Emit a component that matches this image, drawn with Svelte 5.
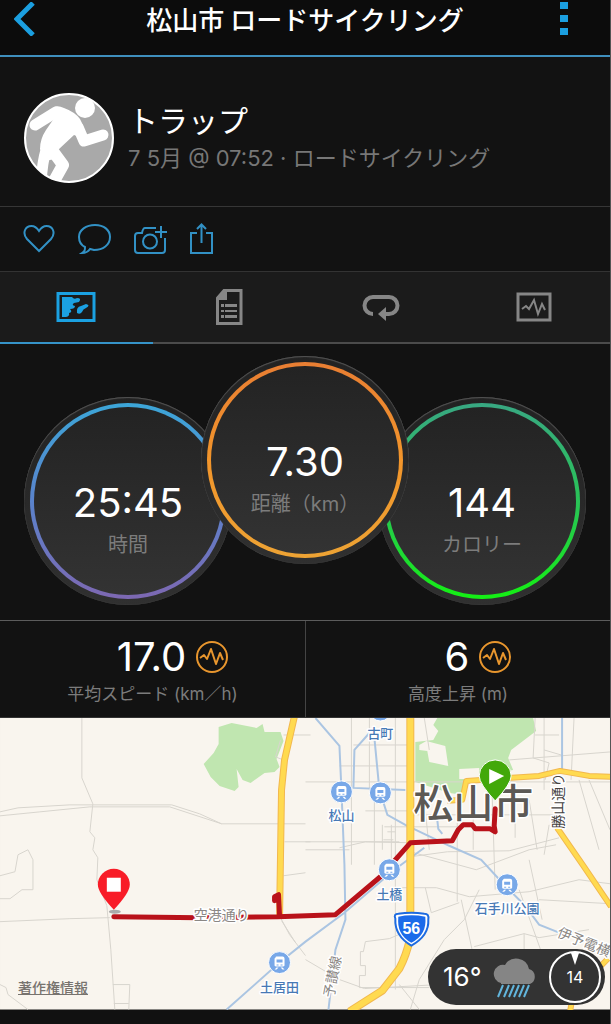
<script>
  const gauges = [
    { value: '25:45', label: '時間', tone: 'time' },
    { value: '7.30', label: '距離（km）', tone: 'distance' },
    { value: '144', label: 'カロリー', tone: 'calories' }
  ];
  const stats = [
    { value: '17.0', label: '平均スピード (km／h)' },
    { value: '6', label: '高度上昇 (m)' }
  ];
  const stations = [
    { x: 381, y: 710, name: '古町', ly: 738 },
    { x: 342, y: 792, name: '松山', ly: 820 },
    { x: 381, y: 793, name: '', ly: 0 },
    { x: 390, y: 870, name: '土橋', ly: 899 },
    { x: 508, y: 885, name: '石手川公園', ly: 913 },
    { x: 280, y: 963, name: '土居田', ly: 992 }
  ];
  let active = $state(0);
</script>

<div class="app">
  <header class="bar">
    <button class="back" aria-label="戻る">
      <svg width="22" height="34" viewBox="0 0 22 34"><path d="M19 1 L3 17 L19 33" fill="none" stroke="#1b9fe0" stroke-width="5" /></svg>
    </button>
    <h1>松山市 ロードサイクリング</h1>
    <button class="more" aria-label="メニュー">
      <svg width="8" height="34" viewBox="0 0 8 34" fill="#1b9fe0"><path d="M0 0h8v7H0zM0 13h8v7H0zM0 26h8v7H0z" /></svg>
    </button>
  </header>

  <section class="profile">
    <svg class="avatar" width="90" height="90" viewBox="0 0 90 90">
      <defs><clipPath id="face"><circle cx="45" cy="45" r="44" /></clipPath></defs>
      <circle cx="45" cy="45" r="44" fill="#a9a9a9" />
      <g clip-path="url(#face)" fill="none" stroke="#fff" stroke-linejoin="round" stroke-linecap="round">
        <circle cx="61" cy="15" r="10" fill="#fff" stroke="none" />
        <path d="M11 32 L32 19" stroke-width="11" />
        <path d="M54 34 L60 48 L79 42" stroke-width="11" />
        <path d="M30 14 Q34 12 40 15 Q51 19 56 26 Q60 33 62 46 L50 42 L34 57 L38 64 L22 68 L16 56 Q16 46 22 37 L31 24 Z" fill="#fff" stroke="none" />
        <path d="M22 57 Q18 70 17 92" stroke-width="11" />
        <path d="M28 57 L39 72 L29 90" stroke-width="12" />
      </g>
      <circle cx="45" cy="45" r="44" fill="none" stroke="#fff" stroke-width="2" />
    </svg>
    <div class="who">
      <div class="name">トラップ</div>
      <div class="meta">7 5月 @ 07:52 · ロードサイクリング</div>
    </div>
  </section>

  <div class="actions">
    <button aria-label="いいね">
      <svg width="32" height="32" viewBox="0 0 32 32"><path d="M16 28 L4 16 C-1 10 2 3 8.500 3 C12 3 14 5 16 8 C18 5 20 3 23.500 3 C30 3 33 10 28 16 Z" /></svg>
    </button>
    <button aria-label="コメント">
      <svg width="34" height="32" viewBox="0 0 34 32"><path d="M8 24 C4 22 2 18 2 14 C2 7 9 2 18 2 C27 2 33 7 33 14 C33 22 26 27 17 27 L13 26 C11 29 8 30 5 30 C8 28 8 27 8 24 Z" /></svg>
    </button>
    <button aria-label="写真を追加">
      <svg width="34" height="32" viewBox="0 0 34 32"><path d="M23 5 H12 Q10 5 9 10 H5 Q2 10 2 13 V27 Q2 30 5 30 H29 Q32 30 32 27 V15 M28 3 V15 M22 9 H34" /><circle cx="17" cy="18.500" r="7" /></svg>
    </button>
    <button aria-label="共有">
      <svg width="24" height="32" viewBox="0 0 24 32"><path d="M8 10 H2 V30 H23 V10 H17 M12.500 20 V2 M8 6 L12.500 1.500 L17 6" /></svg>
    </button>
  </div>

  <nav class="tabs">
    <button class:active={active === 0} onclick={() => (active = 0)} aria-label="地図">
      <svg width="40" height="32" viewBox="0 0 40 32"><rect x="2" y="2.500" width="36" height="27" fill="none" stroke="currentColor" stroke-width="3" /><path fill="currentColor" d="M6 6 H16 Q18 9 21 7 Q26 7 23 11 L18 12 Q15 14 19 15 Q19 18 14 18 Q17 21 13 22 Q14 25 10 26 H6 Z M21 22 Q20 16 25 15 L30 13 Q35 14 30 17 Q27 18 26 21 Q24 24 21 22 Z" /></svg>
    </button>
    <button class:active={active === 1} onclick={() => (active = 1)} aria-label="詳細">
      <svg width="28" height="38" viewBox="0 0 28 38"><path fill="none" stroke="currentColor" stroke-width="3" d="M9 2.500 H26 V35.500 H2.500 V10 Z" /><path fill="currentColor" d="M9 2 H12 V12 H2 V9 Z M6 16h3v3H6z M10 16h12v3H10z M6 22h3v2H6z M10 22h12v2H10z M6 27h3v3H6z M10 27h12v3H10z" /></svg>
    </button>
    <button class:active={active === 2} onclick={() => (active = 2)} aria-label="ラップ">
      <svg width="38" height="28" viewBox="0 0 38 28"><path fill="none" stroke="currentColor" stroke-width="4" d="M11 21 A8.500 8.500 0 0 1 11 4 H27 A8.500 8.500 0 0 1 27 21 H23" /><path fill="currentColor" d="M16 21 L24 14 V28 Z" /></svg>
    </button>
    <button class:active={active === 3} onclick={() => (active = 3)} aria-label="グラフ">
      <svg width="36" height="30" viewBox="0 0 36 30"><rect x="2" y="2" width="32" height="26" fill="none" stroke="currentColor" stroke-width="3" /><path fill="none" stroke="currentColor" stroke-width="2" d="M6 17 L10 14 L13 17 L18 8 L22 22 L26 12 L29 18" /></svg>
    </button>
  </nav>

  <section class="gauges">
    {#each gauges as g}
      <div class="gauge {g.tone}">
        <div class="ring">
          <div class="dial">
            <span class="value">{g.value}</span>
            <span class="label">{g.label}</span>
          </div>
        </div>
      </div>
    {/each}
  </section>

  <section class="stats">
    {#each stats as s}
      <div class="stat">
        <div class="figure">
          <span>{s.value}</span>
          <svg width="32" height="32" viewBox="0 0 32 32" fill="none" stroke="#e8962e" stroke-width="2"><circle cx="16" cy="16" r="15" /><path d="M4 17 L8 14 L11 18 L15 8 L20 23 L24 12 L27 19" stroke-linejoin="round" /></svg>
        </div>
        <div class="caption">{s.label}</div>
      </div>
    {/each}
  </section>

  <section class="map">
    <svg class="canvas" viewBox="0 718 611 292">
      <rect y="718" width="611" height="292" fill="#f9f5ee" />
      <g fill="#c0e6b0">
        <path d="M219 727 L232 723 L257 728 L263 724 L265 732 L281 732 L284 741 L277 759 L280 767 L275 772 L265 773 L251 783 L243 780 L237 769 L239 787 L235 791 L220 786 L211 777 L204 764 L214 753 L219 744 Z" />
        <path d="M438 718 H534 L537 731 L512 750 L509 758 L514 770 L466 778 L464 795 L450 793 L416 782 V742 L434 740 L439 731 L434 725 Z" />
      </g>
      <path fill="#f9f5ee" d="M420 745 L427 741 L446 746 L449 766 L430 762 L428 751 L420 750 Z M460 769 L480 768 V779 H460 Z" />
      <g fill="none" stroke="#d8d5ce" stroke-width="1">
        <path d="M82 718 V778 L93 804 L90 832 L95 838 L93 850 L98 858 L97 880 L107 906 L111 950 L115 1010 M0 812 L18 808 L70 805 H172 L200 814 L222 824 H306 M0 816 L40 812 L90 807 H170 L222 824 M0 922 L70 919 L110 918 M0 899 H10 L22 890 H33 V860 L28 850 L18 855 L15 872 L0 876 M113 985 H130 L129 1010 M114 1004 H129 M0 985 L6 988 L8 995 L28 1010 M284 735 H311 M285 842 H311 M284 876 L306 873 M281 740 L276 757 L284 760 M281 918 L290 935 L306 956 M282 921 L296 943" />
        <path d="M352 718 L352 865 M370 718 V790 M396 718 V990 M306 782 H611 M354 745 H411 M340 766 H411 M306 842 H400 M366 811 H411 M385 827 H480 M411 815 H560 M306 850 H350 M425 718 L430 750 M458 792 V902 M474 800 V850 M493 795 L496 890 M516 790 V838 M530 800 L538 850 M425 800 L430 850 M411 857 L448 852 L510 851 L560 838 M411 852 L477 870 L530 850 L557 845 M375 790 V865 M383 825 V850 M392 825 V865 M388 832 H396 M384 840 H394 M545 718 V790 M550 825 L545 855 M536 718 L534 758 L550 763 L546 780 M536 735 H560 M545 750 L562 755 M575 718 L572 780 M510 760 L611 752 M580 780 L600 850 M590 780 L611 830" />
        <path d="M400 888 L437 888 L470 897 L530 892 L580 880 L611 884 M426 888 L432 913 L460 903 M411 930 L390 939 L366 942 L364 952 H361 V966 H366 V976 H360 V988 H430 M306 960 L340 980 L365 989 L440 985 M411 1010 L420 980 L445 940 L465 920 L480 890 M462 900 L475 960 L479 1000 M475 947 L525 934 L540 938 L590 930 M525 934 L525 1000 M530 860 L543 920 M520 890 L545 960 M540 900 L611 904 M400 985 L420 1010 M340 848 L366 842 L411 843" />
      </g>
      <g fill="none" stroke="#abc5e2" stroke-width="2">
        <path d="M316 718 L340 746 L342 790 L345 865 L346 920 L336 950 L329 1010 M370 733 L355 750 L354 788 L406 790 M375 738 L380 790 L388 815 L406 825 L450 846 L482 860 L505 885 L525 905 L540 925 L560 933 M563 718 V771 M438 820 L439 829 L443 834 M227 1010 L280 963 L306 942 L345 913 L395 870 L425 848" />
      </g>
      <g fill="none" stroke-linejoin="round">
        <g stroke="#f2b84e">
          <path stroke-width="7" d="M295 716 L285 760 L282 790 L280 918" />
          <path stroke-width="8" d="M411 716 V938 Q407 956 400 969 L383 991 L350 1012" />
          <path stroke-width="6" d="M448 801 L463 800 L467 781 L540 776 L561 771 L590 776 L612 777 M558 828 L585 867 L612 907 M571 1012 L574 995 L609 959" />
        </g>
        <g stroke="#ffda50">
          <path stroke-width="5" d="M295 716 L285 760 L282 790 L280 918" />
          <path stroke-width="6" d="M411 716 V938 Q407 956 400 969 L383 991 L350 1012" />
          <path stroke-width="4" d="M448 801 L463 800 L467 781 L540 776 L561 771 L590 776 L612 777 M558 828 L585 867 L612 907 M571 1012 L574 995 L609 959" />
        </g>
      </g>
      <text class="city" x="474" y="818">松山市</text>
      <path d="M114 917 L200 918 L278 917 L336 915 L381 877 L411 843 L453 841 L459 830 L464 825 L473 825 L476 829 L491 829 L496 832 L495 826 L496 809 M275 901 L275 897 L279 895 L280 916" fill="none" stroke="#b9121a" stroke-width="5" stroke-linejoin="round" stroke-linecap="round" />
      {#each stations as s}
        <g transform="translate({s.x} {s.y})">
          <circle r="11" fill="#78a8e8" stroke="#fff" stroke-width="1" />
          <path fill="#fff" fill-rule="evenodd" d="M-4 -5 Q-4 -6 -3 -6 H3 Q5 -6 5 -4 V3 Q5 4 3 4 H-3 Q-5 4 -5 3 V-4 Z M-3 -3 V0 H3 V-3 Z M-3 2 H-1 V3 H-3 Z M1 2 H3 V3 H1 Z M-3 5 H-1 L-3 7 H-5 Z M1 5 H3 L5 7 H3 Z" />
        </g>
        {#if s.name}<text class="station" x={s.x} y={s.ly}>{s.name}</text>{/if}
      {/each}
      <text class="road" x="222" y="920">空港通り</text>
      <text class="road dark" transform="translate(564 801) rotate(-90)">勝山通り</text>
      <text class="road" transform="translate(338 978) rotate(-79)">予讃線</text>
      <text class="road" transform="translate(583 947) rotate(22)">伊予電横</text>
      <path d="M396 919 Q394 914 399 914 Q412 912 425 914 Q430 914 429 920 Q430 936 412 946 Q395 936 396 919 Z" fill="#fff" stroke="#1d6be0" stroke-width="2" />
      <path d="M399 917 Q412 914 426 917 Q428 935 412 943 Q397 935 399 917 Z" fill="#1b6bea" />
      <text class="route-no" x="412" y="934">56</text>
      <ellipse cx="115" cy="912" rx="6" ry="2" fill="#aaa" />
      <path d="M114 910 Q98 893 98 885 A16 16 0 0 1 130 885 Q130 893 114 910 Z" fill="#f81c27" />
      <rect x="107" y="878" width="14" height="14" fill="#fff" />
      <path d="M496 801 Q480 784 480 776 A16 16 0 0 1 512 776 Q512 784 496 801 Z" fill="#42a80a" stroke="#fff" stroke-width="1" />
      <path d="M490 769 V784 L505 776 Z" fill="#fff" />
    </svg>
    <a class="legal" href="#legal">著作権情報</a>
    <div class="weather">
      <span class="temp">16°</span>
      <svg width="46" height="42" viewBox="0 0 46 42">
        <path d="M9 27 A9 9 0 1 1 13 9 A13 13 0 0 1 37 13 A8 8 0 0 1 38 28 L9 28 Z" fill="#858585" />
        <path d="M11 29 L6 41 M17 29 L12 41 M22 29 L17 41 M27 29 L22 41 M32 29 L27 41 M37 29 L32 41" stroke="#62b5dc" stroke-width="2" />
      </svg>
      <span class="compass">
        <svg width="52" height="52" viewBox="0 0 52 52"><circle cx="26" cy="26" r="25" fill="none" stroke="#fff" stroke-width="2" /><path d="M22 2 H30 L26 14 Z" fill="#fff" /></svg>
        <span>14</span>
      </span>
    </div>
  </section>
</div>

<style>
  :global(body) { margin: 0; background: #111; }
  .app { font-family: Inter, "Noto Sans CJK JP", sans-serif; color: #fff; background: #121212; border-right: 1px solid #555; }
  button { background: none; border: 0; padding: 0; margin: 0; color: inherit; cursor: pointer; }
  svg { display: block; }
  .bar { display: flex; align-items: center; justify-content: space-between; height: 38px; padding: 0 42px 17px 14px; background: #0c0c0c; border-bottom: 2px solid #3f8fbd; }
  .back { width: 36px; }
  .more { width: 8px; }
  h1 { margin: 0; font: 500 26px/38px "Noto Sans CJK JP", sans-serif; }
  .profile { display: flex; align-items: center; gap: 14px; height: 137px; padding: 12px 24px 0; border-bottom: 1px solid #363636; }
  .name { font-size: 30px; line-height: 40px; }
  .meta { font-size: 21px; line-height: 34px; color: #777; }
  .meta { font-size: 22px; white-space: nowrap; }
  .actions { display: flex; align-items: center; gap: 22px; height: 64px; padding: 0 23px; }
  .actions svg { fill: none; stroke: #3291c5; stroke-width: 2; }
  .tabs { display: grid; grid-template-columns: repeat(4, 1fr); border-top: 1px solid #333; background: #1b1b1b; }
  .tabs button { display: flex; align-items: center; justify-content: center; height: 72px; color: #868686; border-bottom: 2px solid #4b4b4b; box-sizing: border-box; }
  .tabs .active { color: #1ba1e2; border-color: #3593c8; }
  .gauges { display: flex; justify-content: center; padding: 12px 0 15px; border-bottom: 1px solid #5c5c5c; }
  .gauge { width: 208px; height: 208px; box-sizing: border-box; padding: 6px; margin-top: 41px; border-radius: 50%; background: linear-gradient(#222, #303030); box-shadow: inset 0 1px 1px #555, inset 0 0 1px #555; }
  .distance { margin: 0 -31px 41px; z-index: 1; }
  .ring { height: 100%; box-sizing: border-box; padding: 4px; border-radius: 50%; }
  .time .ring { background: linear-gradient(#3ca6d8, #5a83cc 50%, #7d68b2); }
  .distance .ring { background: linear-gradient(#e87e33, #f2952b 50%, #eda334); }
  .calories .ring { background: linear-gradient(#38a882, #29c257 50%, #14f014); }
  .dial { display: flex; flex-direction: column; align-items: center; height: 100%; box-sizing: border-box; padding-top: 72px; border-radius: 50%; background: linear-gradient(#232323, #333); }
  .value { font-size: 40px; line-height: 48px; }
  .label { font-size: 20px; line-height: 36px; color: #7c7c7c; white-space: nowrap; }
  .stats { display: grid; grid-template-columns: 1fr 1fr; border-bottom: 1px solid #333; }
  .stat { display: flex; flex-direction: column; align-items: center; padding: 12px 0 10px; border-left: 1px solid #444; }
  .stat:first-child { border-left: 0; }
  .figure { display: flex; align-items: center; gap: 10px; padding-left: 40px; font-size: 40px; line-height: 48px; }
  .caption { font-size: 17px; line-height: 26px; color: #7c7c7c; white-space: nowrap; }
  .map { position: relative; border-bottom: 14px solid #111; }
  .canvas { width: 100%; }
  .map text { text-anchor: middle; paint-order: stroke; stroke: #fff; stroke-width: 3px; stroke-linejoin: round; font-family: "Noto Sans CJK JP", sans-serif; }
  .map .city { font-size: 40px; font-weight: 500; fill: #5c5955; }
  .map .station { font-size: 13px; font-weight: 500; fill: #4779b5; }
  .map .road { font-size: 14px; fill: #8b8784; }
  .map .dark { fill: #45423f; }
  .map .route-no { font: 700 16px "Liberation Sans", sans-serif; fill: #fff; stroke: none; }
  .legal { position: absolute; left: 18px; bottom: 10px; font-size: 14px; line-height: 24px; font-weight: 500; color: #77736e; }
  .weather { position: absolute; right: 5px; bottom: 5px; display: flex; align-items: center; justify-content: space-between; width: 177px; height: 56px; box-sizing: border-box; padding: 0 4px 0 15px; border-radius: 28px; background: #333; }
  .temp { font-size: 26px; }
  .compass { display: grid; place-items: center; }
  .compass > * { grid-area: 1 / 1; }
  .compass span { font-size: 16px; }
</style>
